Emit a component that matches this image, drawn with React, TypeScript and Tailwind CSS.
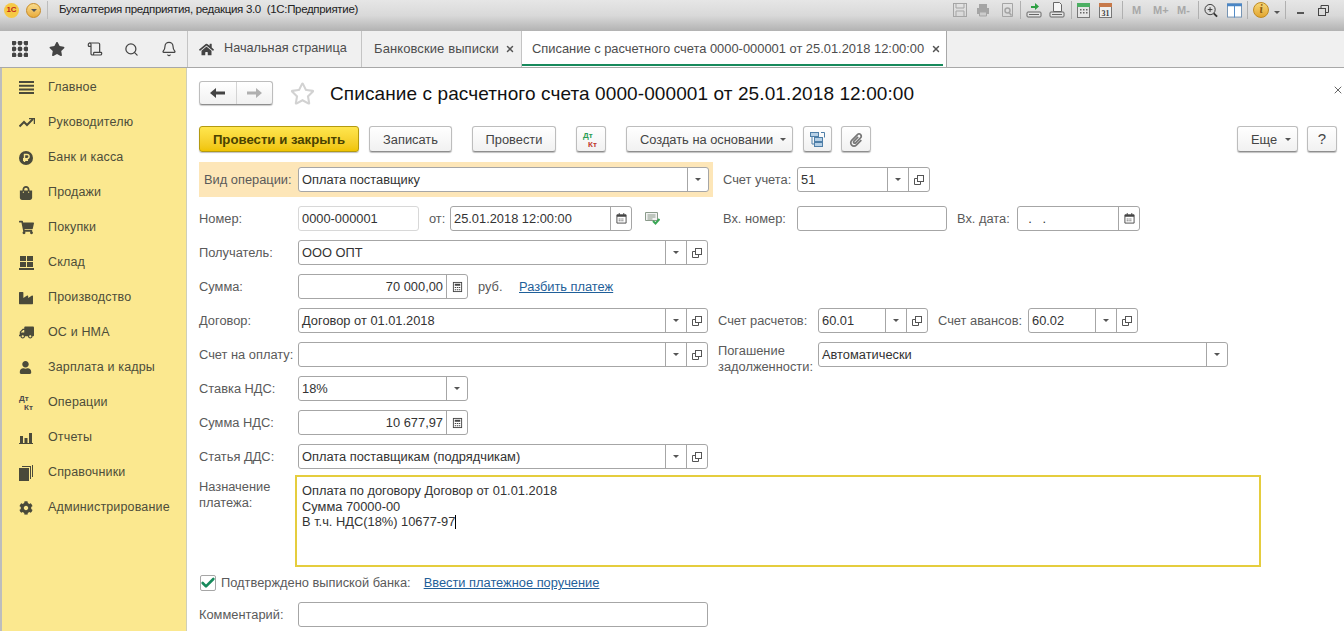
import type { ReactNode } from "react";
import { FaCog, FaHome, FaIndustry, FaPaperclip, FaRegStar, FaShoppingBag, FaShoppingCart, FaStar, FaTruck, FaUser } from "react-icons/fa";
import { Bell, Scroll, Search, X, Check } from "lucide-react";

const Caret = () => (
  <svg width="6" height="3" viewBox="0 0 6 3" className="shrink-0">
    <path d="M0 0h6L3 3z" fill="#555" />
  </svg>
);

const OpenIcon = () => (
  <svg width="10" height="10" viewBox="0 0 10 10" fill="none" stroke="#555" strokeWidth="1">
    <rect x="3.500" y="0.500" width="6" height="6" />
    <path d="M3.500 3.500h-3v6h6v-3" />
  </svg>
);

const CalendarIcon = () => (
  <svg width="11" height="11" viewBox="0 0 12 12">
    <path d="M1 2h10v9H1z" fill="none" stroke="#444" />
    <path d="M1 2h10v2H1zM3 0h1v2H3zM8 0h1v2H8z" fill="#444" />
    <path d="M3 6h1v1H3zM5 6h1v1H5zM7 6h1v1H7zM3 8h1v1H3zM5 8h1v1H5zM7 8h1v1H7z" fill="#444" />
  </svg>
);

const CalcIcon = () => (
  <svg width="11" height="12" viewBox="0 0 12 13">
    <rect x="1.500" y="1.500" width="9" height="10" fill="none" stroke="#444" />
    <path d="M3 3h6v2H3zM3 6.500h1.500v1H3zM5.300 6.500h1.500v1H5.300zM7.500 6.500H9v1H7.500zM3 9h1.500v1H3zM5.300 9h1.500v1H5.300zM7.500 9H9v1H7.500z" fill="#444" />
  </svg>
);

const icons = { caret: <Caret />, open: <OpenIcon />, cal: <CalendarIcon />, calc: <CalcIcon /> };

type IconKey = keyof typeof icons;

const Field = ({ w, value, right, buttons = [], muted, className = "" }: { w: string; value?: string; right?: boolean; buttons?: IconKey[]; muted?: boolean; className?: string }) => (
  <div className={`${w} ${className} h-[25px] shrink-0 flex rounded-[3px] border bg-white ${muted ? "border-[#d8d8d8]" : "border-[#a6a6a6]"}`}>
    <div className={`flex-1 min-w-0 px-[3px] pt-[1px] flex items-center text-[#333] whitespace-pre ${right ? "justify-end" : ""}`}>{value}</div>
    {buttons.map((b, i) => (
      <div key={i} className="w-[21px] shrink-0 border-l border-[#a6a6a6] flex items-center justify-center">
        {icons[b]}
      </div>
    ))}
  </div>
);

const Label = ({ children, w = "w-[99px]", className = "" }: { children: ReactNode; w?: string; className?: string }) => (
  <div className={`${w} ${className} shrink-0 text-[#5a5a5a] whitespace-nowrap`}>{children}</div>
);

const Row = ({ children, className = "mt-[9px]" }: { children: ReactNode; className?: string }) => (
  <div className={`${className} flex items-center h-[25px]`}>{children}</div>
);

const Btn = ({ children, w, className = "justify-center" }: { children: ReactNode; w: string; className?: string }) => (
  <div className={`${w} ${className} h-[26px] pt-[1px] shrink-0 flex items-center rounded-[3px] border border-[#bdbdbd] border-b-[#8e8e8e] bg-gradient-to-b from-white to-[#f1f1f1] text-[#444] shadow-[0_1px_1px_rgba(0,0,0,0.25)]`}>
    {children}
  </div>
);

const DtKt = ({ color }: { color?: boolean }) => (
  <div className="relative w-[16px] h-[15px] font-bold text-[8px] leading-[9px]">
    <span className={`absolute left-0 top-[-1.5px] ${color ? "text-[#2a9d55]" : "text-[#4a4a4a]"}`}>Дт</span>
    <span className={`absolute left-[5px] top-[8px] ${color ? "text-[#c0392b]" : "text-[#4a4a4a]"}`}>Кт</span>
  </div>
);

const sideIcon = "text-[#4a4a3a]";

const menu: { label: string; icon: ReactNode }[] = [
  {
    label: "Главное",
    icon: (
      <svg width="15" height="13" viewBox="0 0 15 13" fill="#4a4a3a">
        <path d="M0 0h15v2H0zM0 3.700h15v2H0zM0 7.400h15v2H0zM0 11h15v2H0z" />
      </svg>
    ),
  },
  {
    label: "Руководителю",
    icon: (
      <svg width="16" height="10" viewBox="0 0 16 10" fill="none" stroke="#4a4a3a" strokeWidth="2">
        <path d="M0.500 8.500L5 4l3 3 6-6" />
        <path d="M10 0.500h5.500V6" strokeWidth="1.500" />
      </svg>
    ),
  },
  {
    label: "Банк и касса",
    icon: (
      <svg width="14" height="14" viewBox="0 0 14 14">
        <circle cx="7" cy="7" r="7" fill="#4a4a3a" />
        <path d="M5.500 11V3.500H8a2 2 0 010 4.200H4M4 9.300h5" fill="none" stroke="#fbe88f" strokeWidth="1.400" />
      </svg>
    ),
  },
  { label: "Продажи", icon: <FaShoppingBag size={14} className={sideIcon} /> },
  { label: "Покупки", icon: <FaShoppingCart size={15} className={sideIcon} /> },
  {
    label: "Склад",
    icon: (
      <svg width="15" height="14" viewBox="0 0 15 14" fill="#4a4a3a">
        <path d="M1 0h6v5H1zM8 0h6v5H8zM1 6h6v5H1zM8 6h6v5H8zM0 12h15v2H0z" />
      </svg>
    ),
  },
  { label: "Производство", icon: <FaIndustry size={14} className={sideIcon} /> },
  { label: "ОС и НМА", icon: <FaTruck size={15} className={`${sideIcon} -scale-x-100`} /> },
  { label: "Зарплата и кадры", icon: <FaUser size={13} className={sideIcon} /> },
  { label: "Операции", icon: <DtKt /> },
  {
    label: "Отчеты",
    icon: (
      <svg width="14" height="12" viewBox="0 0 14 12" fill="#4a4a3a">
        <path d="M1 4h3v7H1zM5.500 6h3v5h-3zM10 1h3v10h-3zM0 11h14v1H0z" />
      </svg>
    ),
  },
  {
    label: "Справочники",
    icon: (
      <svg width="15" height="16" viewBox="0 0 15 16" fill="#4a4a3a">
        <path d="M0 3h10v13H0zM11 2v12h1V1H3v1zM13 0v12h1V0z" />
      </svg>
    ),
  },
  { label: "Администрирование", icon: <FaCog size={14} className={sideIcon} /> },
];

const Tb = ({ children, className = "" }: { children: ReactNode; className?: string }) => (
  <div className={`${className} h-[18px] flex items-center justify-center shrink-0`}>{children}</div>
);

const TitleIcons = () => (
  <div className="ml-auto flex items-center text-[#a8a8a8] font-bold text-[11px]">
    <Tb className="w-[14px]">
      <svg width="14" height="14" viewBox="0 0 14 14" fill="none" stroke="#a5a5a5"><rect x="0.500" y="0.500" width="13" height="13" /><path d="M3 1v4h8V1M3 13V8h8v5" /></svg>
    </Tb>
    <Tb className="w-[14px] ml-[9px]">
      <svg width="14" height="14" viewBox="0 0 14 14" fill="#a5a5a5"><path d="M3 1h8v4H3zM1 5h12v6H1z" /><path d="M3.500 9h7v4h-7z" fill="#ccc" stroke="#a5a5a5" /></svg>
    </Tb>
    <Tb className="w-[14px] ml-[10px]">
      <svg width="13" height="14" viewBox="0 0 13 14" fill="none" stroke="#a5a5a5"><path d="M1.500 0.500h10v13h-10z" /><circle cx="6.500" cy="7.500" r="2.500" strokeWidth="1.500" /><path d="M8 9.500l2.500 3" strokeWidth="1.500" /></svg>
    </Tb>
    <div className="w-px h-[18px] bg-[#b0b0b0] ml-[6px]" />
    <Tb className="w-[16px] ml-[5px]">
      <svg width="16" height="16" viewBox="0 0 16 16"><path d="M5 4h4V1l4 3.500L9 8V6H5z" fill="#2ea043" /><rect x="1" y="10" width="14" height="5" rx="1" fill="#e4e4e4" stroke="#666" /><path d="M3 12.500h10" stroke="#666" /></svg>
    </Tb>
    <Tb className="w-[16px] ml-[7px]">
      <svg width="16" height="16" viewBox="0 0 16 16"><path d="M4.500 0.500h6l2 2v7h-8z" fill="#f5f5f5" stroke="#666" /><rect x="1" y="10" width="14" height="5" rx="1" fill="#e4e4e4" stroke="#666" /><path d="M3 12.500h10" stroke="#666" /></svg>
    </Tb>
    <div className="w-px h-[18px] bg-[#b0b0b0] ml-[6px]" />
    <Tb className="w-[14px] ml-[4px]">
      <svg width="13" height="15" viewBox="0 0 13 15"><rect x="0.500" y="0.500" width="12" height="14" fill="#e6e6e6" stroke="#777" /><path d="M0 0h13v4H0z" fill="#4caf63" /><path d="M3 6h1.500v1.500H3zM6 6h1.500v1.500H6zM9 6h1.500v1.500H9zM3 9h1.500v1.500H3zM6 9h1.500v1.500H6zM9 9h1.500v1.500H9z" fill="#666" /></svg>
    </Tb>
    <Tb className="w-[13px] ml-[9px]">
      <svg width="13" height="15" viewBox="0 0 13 15"><rect x="0.500" y="0.500" width="12" height="14" fill="#efefef" stroke="#777" /><path d="M0 0h13v4H0z" fill="#c7794a" /><text x="6.500" y="12.500" fontSize="8" textAnchor="middle" fill="#444" fontFamily="Liberation Serif">31</text></svg>
    </Tb>
    <div className="w-px h-[18px] bg-[#b0b0b0] ml-[10px]" />
    <span className="ml-[9px] w-[10px]">M</span>
    <span className="ml-[11px] w-[17px]">M+</span>
    <span className="ml-[7px] w-[15px]">M-</span>
    <div className="w-px h-[18px] bg-[#b0b0b0] ml-[6px]" />
    <Tb className="w-[14px] ml-[5px]">
      <svg width="15" height="15" viewBox="0 0 15 15" fill="none" stroke="#333"><circle cx="6.500" cy="6.500" r="5.500" /><path d="M4 6.500h5M6.500 4v5" /><path d="M10.500 10.500L14 14" strokeWidth="2" /></svg>
    </Tb>
    <Tb className="w-[15px] ml-[9px]">
      <svg width="16" height="15" viewBox="0 0 16 15"><rect x="0.500" y="0.500" width="15" height="14" fill="#fff" stroke="#6f8fb0" /><path d="M0 0h16v3H0zM7.500 0h1v15h-1z" fill="#4a86c5" /></svg>
    </Tb>
    <div className="w-px h-[18px] bg-[#b0b0b0] ml-[5px]" />
    <div className="ml-[5px] w-[16px] h-[16px] rounded-full bg-gradient-to-b from-[#f6d774] to-[#e2a52c] border border-[#c08a20] flex items-center justify-center text-[#8a5a10] text-[11px] italic font-serif">i</div>
    <div className="ml-[5px] mt-[4px]"><Caret /></div>
    <div className="w-px h-[18px] bg-[#b0b0b0] ml-[5px]" />
    <div className="ml-[11px] w-[7px] h-[2px] bg-[#555] mt-[5px]" />
    <Tb className="w-[11px] ml-[14px]">
      <svg width="11" height="11" viewBox="0 0 11 11" fill="none" stroke="#444"><rect x="0.500" y="3.500" width="7" height="7" /><path d="M3 3V0.500h7.500V7.500H8" /></svg>
    </Tb>
    <X size={12} strokeWidth={3} className="ml-[13px] -mr-[12px] text-[#444] shrink-0" />
  </div>
);

export default function App() {
  return (
    <div className="w-[1344px] h-[631px] overflow-hidden bg-white text-[12.850px] flex flex-col" style={{ fontFamily: '"Liberation Sans", Arial, sans-serif' }}>
      {/* window title */}
      <div className="h-[31px] shrink-0 flex items-start pt-[1px] bg-gradient-to-b from-[#e6e6e6] via-[#d9d9d9] to-[#b2b2b2] pr-[2px]">
        <div className="flex items-center h-[18px] w-full">
          <div className="ml-[4px] w-[15px] h-[15px] rounded-full bg-[#f6c945] flex items-center justify-center text-[8px] font-bold text-[#c0281c]">1С</div>
          <div className="ml-[7px] w-[15px] h-[15px] rounded-full bg-gradient-to-b from-[#f8dc8c] to-[#e9ac3a] border border-[#c88a24] flex items-center justify-center"><Caret /></div>
          <div className="ml-[6px] w-px h-[18px] bg-[#bcbcbc]" />
          <div className="ml-[11px] text-[#222] text-[11.500px] tracking-[-0.32px]">Бухгалтерия предприятия, редакция 3.0&nbsp; (1С:Предприятие)</div>
          <TitleIcons />
        </div>
      </div>

      {/* tabs */}
      <div className="h-[37px] shrink-0 flex bg-[#f0f0f0] border-b border-[#a8a8a8] text-[#4d4d4d]">
        <div className="w-[188px] shrink-0 flex items-center bg-[#efefef] border-r border-[#c4c4c4] text-[#444]">
          <svg width="16" height="16" viewBox="0 0 16 16" fill="#444" className="ml-[12px]">
            {[2, 8, 14].flatMap((y) => [2, 8, 14].map((x) => <circle key={`${x}-${y}`} cx={x} cy={y} r="2.400" />))}
          </svg>
          <FaStar size={16} className="ml-[21px]" />
          <Scroll size={16} strokeWidth={1.800} className="ml-[22px]" />
          <Search size={15} strokeWidth={2} className="ml-[21px]" />
          <Bell size={16} strokeWidth={1.800} className="ml-[22px]" />
        </div>
        <div className="w-[174px] shrink-0 flex items-center border-r border-[#c4c4c4] pl-[11px] whitespace-nowrap text-[12.700px]">
          <FaHome size={15} className="text-[#444]" />
          <span className="ml-[10px]">Начальная страница</span>
        </div>
        <div className="w-[160px] shrink-0 flex items-center border-r border-[#c4c4c4] pl-[12px] whitespace-nowrap text-[13px] tracking-[0.1px]">
          <span>Банковские выписки</span>
          <X size={10} strokeWidth={3.500} className="ml-[6px] text-[#555]" />
        </div>
        <div className="w-[425px] shrink-0 flex items-center border-r border-[#a8a8a8] pl-[10px] relative bg-white whitespace-nowrap text-[12.900px]">
          <span>Списание с расчетного счета 0000-000001 от 25.01.2018 12:00:00</span>
          <X size={10} strokeWidth={3.500} className="ml-[7px] text-[#555] shrink-0" />
          <div className="absolute left-0 right-[3px] bottom-[1px] h-[2px] bg-[#178a5c]" />
        </div>
      </div>

      <div className="flex-1 min-h-0 flex">
        {/* sidebar */}
        <div className="w-[187px] shrink-0 bg-[#fbe88f] border-l-2 border-r border-l-[#bdbdbd] border-r-[#cfcfb8] pt-[2px] text-[#4d4d3a] text-[12.500px] tracking-[0.15px]">
          {menu.map((m) => (
            <div key={m.label} className="h-[35px] flex items-center">
              <div className="w-[46px] pl-[17px] shrink-0 flex justify-start">{m.icon}</div>
              <span>{m.label}</span>
            </div>
          ))}
        </div>

        {/* form */}
        <div className="flex-1 min-w-0 pl-[12px] relative">
          <X size={12} className="absolute right-[0px] top-[16px] text-[#666]" />
          <div className="h-[24px] mt-[13px] flex items-center">
            <div className="w-[74px] h-[24px] flex rounded-[3px] border border-[#bdbdbd] border-b-[#8e8e8e] bg-gradient-to-b from-white to-[#f1f1f1] shadow-[0_1px_1px_rgba(0,0,0,0.2)]">
              <div className="flex-1 border-r border-[#d4d4d4] flex items-center justify-center">
                <svg width="15" height="10" viewBox="0 0 15 10" fill="#444"><path d="M0 5l6-5v3.500h9v3H6V10z" /></svg>
              </div>
              <div className="flex-1 flex items-center justify-center">
                <svg width="15" height="10" viewBox="0 0 15 10" fill="#b0b0b0"><path d="M15 5L9 0v3.500H0v3h9V10z" /></svg>
              </div>
            </div>
            <FaRegStar size={25} className="ml-[17px] text-[#d2d2d2]" />
            <h1 className="ml-[15px] pt-[2px] text-[19px] text-[#111] whitespace-nowrap tracking-[0.1px]">Списание с расчетного счета 0000-000001 от 25.01.2018 12:00:00</h1>
          </div>

          {/* commands */}
          <div className="mt-[21px] flex pr-[7px]">
            <div className="w-[160px] h-[26px] pt-[1px] flex items-center justify-center rounded-[3px] border border-[#b39a10] bg-gradient-to-b from-[#ffe64d] to-[#f0c400] font-bold text-[#4a4200] text-[13.200px] shadow-[0_1px_1px_rgba(0,0,0,0.25)]">Провести и закрыть</div>
            <Btn w="w-[83px]" className="ml-[10px] justify-center">Записать</Btn>
            <Btn w="w-[84px]" className="ml-[20px] justify-center">Провести</Btn>
            <Btn w="w-[30px]" className="ml-[20px] justify-center"><DtKt color /></Btn>
            <Btn w="w-[167px]" className="ml-[20px] pl-[13px] gap-[7px]">Создать на основании <Caret /></Btn>
            <Btn w="w-[29px]" className="ml-[10px] justify-center">
              <svg width="15" height="15" viewBox="0 0 15 15" fill="none" stroke="#4f7fa8">
                <rect x="0.500" y="0.500" width="8" height="4" fill="#b6d0e6" />
                <rect x="4.500" y="5.500" width="8" height="4" fill="#b6d0e6" />
                <rect x="4.500" y="10.500" width="8" height="4" fill="#b6d0e6" />
                <path d="M11 0.500h3.500v5M2 5v7h2" />
              </svg>
            </Btn>
            <Btn w="w-[30px]" className="ml-[9px] justify-center"><FaPaperclip size={14} className="text-[#777]" /></Btn>
            <Btn w="w-[61px]" className="ml-auto pl-[13px] gap-[8px]">Еще <Caret /></Btn>
            <Btn w="w-[30px]" className="ml-[9px] justify-center text-[15px]">?</Btn>
          </div>

          {/* fields */}
          <div className="mt-[10px] h-[35px] flex items-center">
            <div className="w-[514px] h-[35px] shrink-0 bg-[#fde6b8] flex items-center pl-[5px]">
              <Label w="w-[94px]">Вид операции:</Label>
              <Field w="w-[411px]" value="Оплата поставщику" buttons={["caret"]} />
            </div>
            <Label w="w-[74px]" className="ml-[10px]">Счет учета:</Label>
            <Field w="w-[133px]" value="51" buttons={["caret", "open"]} />
          </div>
          <Row className="mt-[9px]">
            <Label>Номер:</Label>
            <Field w="w-[121px]" value="0000-000001" muted />
            <Label w="w-[21px]" className="ml-[10px]">от:</Label>
            <Field w="w-[182px]" value="25.01.2018 12:00:00" buttons={["cal"]} />
            <svg width="15" height="13" viewBox="0 0 15 13" fill="none" className="ml-[13px] shrink-0">
              <path d="M0.500 0.500h12v8h-12z" fill="#f2f2f2" stroke="#8a9a8a" />
              <path d="M2.500 3h8M2.500 5h8M2.500 7h5" stroke="#8a9a8a" />
              <path d="M8 9l2.500 2.500L14.500 7" stroke="#3aa655" strokeWidth="2" />
            </svg>
            <Label w="w-[74px]" className="ml-[63px]">Вх. номер:</Label>
            <Field w="w-[150px]" />
            <Label w="w-[60px]" className="ml-[10px]">Вх. дата:</Label>
            <Field w="w-[123px]" value="  .   ." buttons={["cal"]} />
          </Row>
          <Row>
            <Label>Получатель:</Label>
            <Field w="w-[410px]" value="ООО ОПТ" buttons={["caret", "open"]} />
          </Row>
          <Row>
            <Label>Сумма:</Label>
            <Field w="w-[170px]" value="70 000,00" right buttons={["calc"]} />
            <Label w="w-[41px]" className="ml-[10px]">руб.</Label>
            <a className="text-[#1f5f99] underline whitespace-nowrap">Разбить платеж</a>
          </Row>
          <Row>
            <Label>Договор:</Label>
            <Field w="w-[410px]" value="Договор от 01.01.2018" buttons={["caret", "open"]} />
            <Label w="w-[100px]" className="ml-[10px]">Счет расчетов:</Label>
            <Field w="w-[110px]" value="60.01" buttons={["caret", "open"]} />
            <Label w="w-[90px]" className="ml-[10px]">Счет авансов:</Label>
            <Field w="w-[110px]" value="60.02" buttons={["caret", "open"]} />
          </Row>
          <Row>
            <Label>Счет на оплату:</Label>
            <Field w="w-[410px]" buttons={["caret", "open"]} />
            <Label w="w-[100px]" className="ml-[10px] pt-[8px] leading-[16px]">Погашение<br />задолженности:</Label>
            <Field w="w-[410px]" value="Автоматически" buttons={["caret"]} />
          </Row>
          <Row>
            <Label>Ставка НДС:</Label>
            <Field w="w-[170px]" value="18%" buttons={["caret"]} />
          </Row>
          <Row>
            <Label>Сумма НДС:</Label>
            <Field w="w-[170px]" value="10 677,97" right buttons={["calc"]} />
          </Row>
          <Row>
            <Label>Статья ДДС:</Label>
            <Field w="w-[410px]" value="Оплата поставщикам (подрядчикам)" buttons={["caret", "open"]} />
          </Row>

          <div className="mt-[6px] flex">
            <Label w="w-[96px]" className="pt-[4px] leading-[16px]">Назначение<br />платежа:</Label>
            <div className="w-[966px] h-[92px] border-2 border-[#e5cd3e] px-[5px] pt-[6px] leading-[15.500px] text-[#333]">
              Оплата по договору Договор от 01.01.2018<br />
              Сумма 70000-00<br />
              В т.ч. НДС(18%) 10677-97<span className="inline-block w-px h-[14px] bg-black align-text-bottom" />
            </div>
          </div>

          <div className="mt-[8px] h-[16px] flex items-center">
            <div className="ml-[1px] w-[16px] h-[16px] border border-[#a6a6a6] rounded-[2px] flex items-center justify-center bg-white">
              <Check size={16} strokeWidth={4} className="text-[#178a5c] shrink-0" />
            </div>
            <span className="ml-[5px] text-[#5a5a5a] whitespace-nowrap">Подтверждено выпиской банка:</span>
            <a className="ml-[13px] text-[#1f5f99] underline whitespace-nowrap">Ввести платежное поручение</a>
          </div>

          <Row className="mt-[11px]">
            <Label>Комментарий:</Label>
            <Field w="w-[410px]" />
          </Row>
        </div>
      </div>
    </div>
  );
}
